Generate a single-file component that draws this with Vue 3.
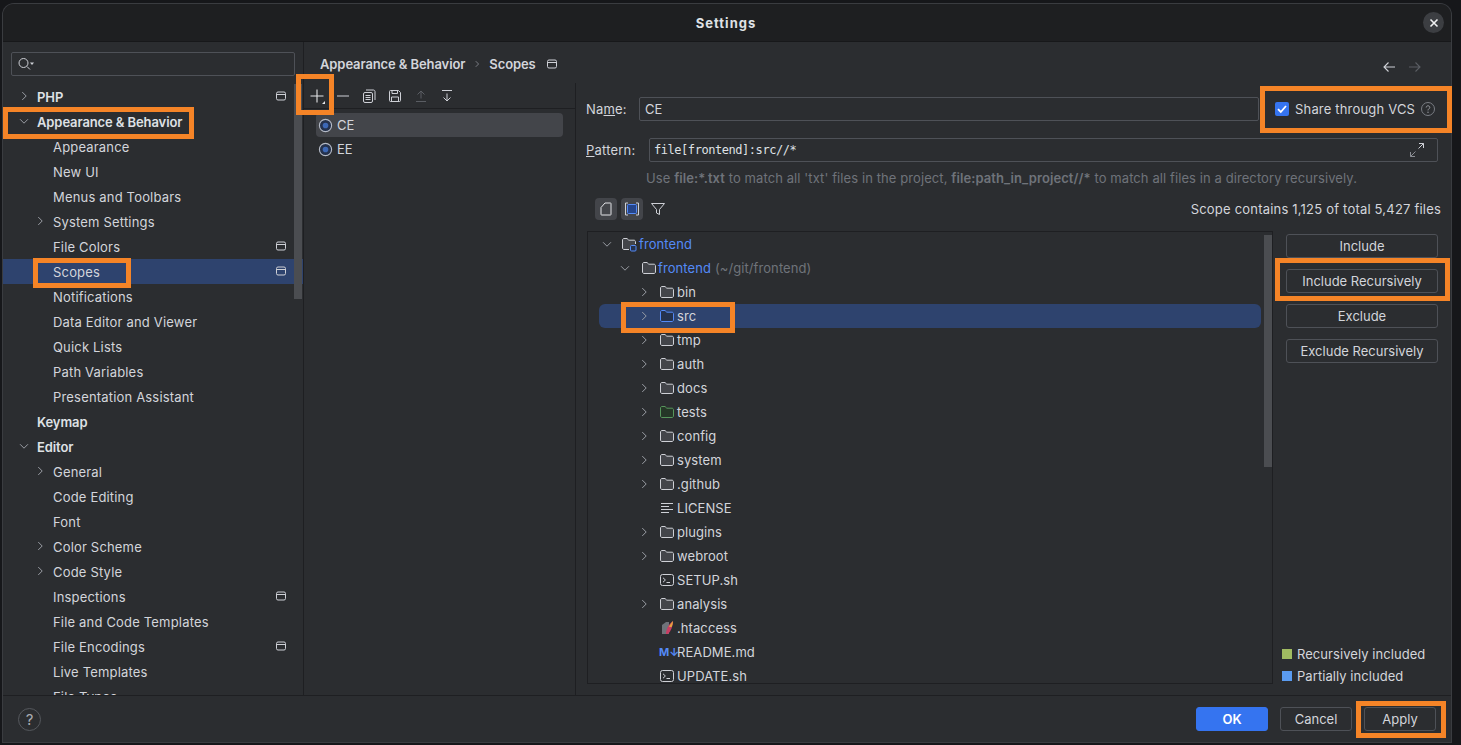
<script setup>
const settings = [
  { t: 'PHP', lv: 1, chev: 'r', bold: true, pin: true },
  { t: 'Appearance & Behavior', lv: 1, chev: 'd', bold: true },
  { t: 'Appearance', lv: 2 },
  { t: 'New UI', lv: 2 },
  { t: 'Menus and Toolbars', lv: 2 },
  { t: 'System Settings', lv: 2, chev: 'r' },
  { t: 'File Colors', lv: 2, pin: true },
  { t: 'Scopes', lv: 2, pin: true, sel: true },
  { t: 'Notifications', lv: 2 },
  { t: 'Data Editor and Viewer', lv: 2 },
  { t: 'Quick Lists', lv: 2 },
  { t: 'Path Variables', lv: 2 },
  { t: 'Presentation Assistant', lv: 2 },
  { t: 'Keymap', lv: 1, bold: true },
  { t: 'Editor', lv: 1, chev: 'd', bold: true },
  { t: 'General', lv: 2, chev: 'r' },
  { t: 'Code Editing', lv: 2 },
  { t: 'Font', lv: 2 },
  { t: 'Color Scheme', lv: 2, chev: 'r' },
  { t: 'Code Style', lv: 2, chev: 'r' },
  { t: 'Inspections', lv: 2, pin: true },
  { t: 'File and Code Templates', lv: 2 },
  { t: 'File Encodings', lv: 2, pin: true },
  { t: 'Live Templates', lv: 2 },
  { t: 'File Types', lv: 2 }
]
const files = [
  { t: 'frontend', lv: 0, chev: 'd', icon: 'module', link: true },
  { t: 'frontend', lv: 1, chev: 'd', icon: 'folder', link: true, note: '(~/git/frontend)' },
  { t: 'bin', lv: 2, chev: 'r', icon: 'folder' },
  { t: 'src', lv: 2, chev: 'r', icon: 'folder-src', sel: true },
  { t: 'tmp', lv: 2, chev: 'r', icon: 'folder' },
  { t: 'auth', lv: 2, chev: 'r', icon: 'folder' },
  { t: 'docs', lv: 2, chev: 'r', icon: 'folder' },
  { t: 'tests', lv: 2, chev: 'r', icon: 'folder-test' },
  { t: 'config', lv: 2, chev: 'r', icon: 'folder' },
  { t: 'system', lv: 2, chev: 'r', icon: 'folder' },
  { t: '.github', lv: 2, chev: 'r', icon: 'folder' },
  { t: 'LICENSE', lv: 2, icon: 'text' },
  { t: 'plugins', lv: 2, chev: 'r', icon: 'folder' },
  { t: 'webroot', lv: 2, chev: 'r', icon: 'folder' },
  { t: 'SETUP.sh', lv: 2, icon: 'shell' },
  { t: 'analysis', lv: 2, chev: 'r', icon: 'folder' },
  { t: '.htaccess', lv: 2, icon: 'apache' },
  { t: 'README.md', lv: 2, icon: 'md' },
  { t: 'UPDATE.sh', lv: 2, icon: 'shell' }
]
const actions = ['Include', 'Include Recursively', 'Exclude', 'Exclude Recursively']
</script>

<template>
  <div class="screen">
    <svg class="defs" width="0" height="0" aria-hidden="true">
      <symbol id="chev-r" viewBox="0 0 16 16"><path d="M6 3.500 10.500 8 6 12.500" fill="none" stroke="currentColor" stroke-width="1.100"/></symbol>
      <symbol id="chev-d" viewBox="0 0 16 16"><path d="M3.500 6 8 10.500 12.500 6" fill="none" stroke="currentColor" stroke-width="1.100"/></symbol>
      <symbol id="pin" viewBox="0 0 12 12"><rect x="1.500" y="2" width="9" height="8" rx="1.500" fill="none" stroke="currentColor"/><path d="M1.500 4.500h9" stroke="currentColor"/></symbol>
      <symbol id="folder" viewBox="0 0 16 16"><path d="M1.500 4c0-.8.7-1.500 1.500-1.500h3L7.800 4.200H13c.8 0 1.500.7 1.500 1.500V12c0 .8-.7 1.500-1.500 1.500H3c-.8 0-1.500-.7-1.500-1.500Z" fill="#43454a" stroke="#ced0d6"/></symbol>
      <symbol id="folder-src" viewBox="0 0 16 16"><path d="M1.500 4c0-.8.7-1.500 1.500-1.500h3L7.800 4.200H13c.8 0 1.500.7 1.500 1.500V12c0 .8-.7 1.500-1.500 1.500H3c-.8 0-1.500-.7-1.500-1.500Z" fill="#25324d" stroke="#548af7"/></symbol>
      <symbol id="folder-test" viewBox="0 0 16 16"><path d="M1.500 4c0-.8.7-1.500 1.500-1.500h3L7.800 4.200H13c.8 0 1.500.7 1.500 1.500V12c0 .8-.7 1.500-1.500 1.500H3c-.8 0-1.500-.7-1.500-1.500Z" fill="#253627" stroke="#57965c"/></symbol>
      <symbol id="module" viewBox="0 0 16 16"><path d="M8 13.500H3c-.8 0-1.500-.7-1.500-1.500V4c0-.8.7-1.500 1.500-1.500h3L7.800 4.200H13c.8 0 1.500.7 1.500 1.500V8" fill="#43454a" stroke="#ced0d6"/><rect x="9.500" y="9.500" width="5.500" height="5.500" rx="1" fill="#25324d" stroke="#548af7"/></symbol>
      <symbol id="text" viewBox="0 0 16 16"><path d="M2 3.500h12M2 6.500h8M2 9.500h12M2 12.500h8" stroke="#ced0d6" fill="none"/></symbol>
      <symbol id="shell" viewBox="0 0 16 16"><rect x="1.500" y="2.500" width="13" height="11" rx="2" fill="#2b2d30" stroke="#ced0d6"/><path d="m4 5.800 2.400 2.200L4 10.200M7.500 10.500H11" fill="none" stroke="#ced0d6"/></symbol>
      <symbol id="apache" viewBox="0 0 16 16"><path d="M3 14V5l4-3h3v12Z" fill="#6f737a"/><path d="M7 14C7 9 10 4 14 1c0 5-2 10-5 13Z" fill="#c93d63"/><path d="M10 7c1-2.500 2.500-4.500 4-6 0 2-.5 4-1.300 6Z" fill="#e8a33d"/></symbol>
      <symbol id="scope" viewBox="0 0 16 16"><circle cx="8" cy="8" r="6.500" fill="#25324d" stroke="#b4bac6" stroke-width="1.200"/><circle cx="8" cy="8" r="3" fill="#3d68b5"/></symbol>
    </svg>

    <div class="window">
      <header class="title">
        <span class="title-text">Settings</span>
        <button class="close" aria-label="Close">
          <svg width="10" height="10" viewBox="0 0 10 10"><path d="m1.500 1.500 7 7m0-7-7 7" stroke="#f0f1f2" stroke-width="1.600"/></svg>
        </button>
      </header>

      <div class="body">
        <aside class="side">
          <div class="search">
            <svg width="18" height="16" viewBox="0 0 18 16"><circle cx="6.500" cy="7" r="4.500" fill="none" stroke="#ced0d6"/><path d="m10 10.500 3 3" stroke="#ced0d6"/><path d="m13 6.500h4l-2 2.500Z" fill="#ced0d6"/></svg>
          </div>
          <div class="nav">
            <div v-for="n in settings" :key="n.t" class="nav-row" :class="{ sel: n.sel, bold: n.bold, ['lv' + n.lv]: true }">
              <svg v-if="n.chev" class="chev" width="14" height="14"><use :href="'#chev-' + n.chev"/></svg>
              <span class="nav-text">{{ n.t }}</span>
              <svg v-if="n.pin" class="pin" width="12" height="12"><use href="#pin"/></svg>
            </div>
            <div class="nav-thumb"></div>
          </div>
        </aside>

        <main class="main">
          <div class="crumbs">
            <span class="crumb">Appearance &amp; Behavior</span>
            <svg class="crumb-sep" width="10" height="10"><use href="#chev-r"/></svg>
            <span class="crumb">Scopes</span>
            <svg class="crumb-pin" width="12" height="12"><use href="#pin"/></svg>
            <div class="history">
              <svg width="16" height="16" viewBox="0 0 16 16"><path d="M14 8H3M7.500 3.500 3 8l4.500 4.500" fill="none" stroke="#ced0d6" stroke-width="1.100"/></svg>
              <svg width="16" height="16" viewBox="0 0 16 16"><path d="M2 8h11M8.500 3.500 13 8l-4.500 4.500" fill="none" stroke="#5a5d63" stroke-width="1.100"/></svg>
            </div>
          </div>

          <div class="split">
            <section class="scopes">
              <div class="scope-tools">
                <svg class="ti" width="16" height="16" viewBox="0 0 16 16"><path d="M8 1.500v13M1.500 8h13" stroke="#e4e5e8" stroke-width="1.100"/><path d="M16 13v3h-3Z" fill="#e4e5e8"/></svg>
                <svg class="ti" width="16" height="16" viewBox="0 0 16 16"><path d="M2 8h12" stroke="#ced0d6" stroke-width="1.100"/></svg>
                <svg class="ti" width="16" height="16" viewBox="0 0 16 16"><rect x="2.500" y="4.500" width="9" height="10" rx="1.500" fill="none" stroke="#ced0d6"/><path d="M5 2h7.500c.8 0 1.500.7 1.500 1.500V12M4.500 7.500h5M4.500 9.500h5M4.500 11.500h5" fill="none" stroke="#ced0d6"/></svg>
                <svg class="ti" width="16" height="16" viewBox="0 0 16 16"><path d="M2.500 3.500c0-.6.4-1 1-1h8l2 2v8c0 .6-.4 1-1 1h-9c-.6 0-1-.4-1-1Z" fill="none" stroke="#ced0d6"/><path d="M5 2.500v3h5.500v-3M4.500 13.500V9h7v4.500" fill="none" stroke="#ced0d6"/></svg>
                <svg class="ti" width="16" height="16" viewBox="0 0 16 16"><path d="M8 10.500V3M4.500 6.500 8 3l3.500 3.500M3 13.500h10" fill="none" stroke="#5a5d63"/></svg>
                <svg class="ti" width="16" height="16" viewBox="0 0 16 16"><path d="M8 5.500V13M4.500 9.500 8 13l3.500-3.500M3 2.500h10" fill="none" stroke="#ced0d6"/></svg>
              </div>
              <div class="scope-list">
                <div class="scope-row active"><svg width="15" height="15"><use href="#scope"/></svg>CE</div>
                <div class="scope-row"><svg width="15" height="15"><use href="#scope"/></svg>EE</div>
              </div>
            </section>

            <section class="form">
              <div class="field-row">
                <label class="lbl lbl-name">Na<u>m</u>e:</label>
                <div class="input name-input">CE</div>
                <label class="share">
                  <span class="check">
                    <svg width="14" height="14" viewBox="0 0 14 14"><path d="m3 7.200 2.800 2.800L11 4" fill="none" stroke="#fff" stroke-width="1.800"/></svg>
                  </span>
                  Share through VCS
                  <svg class="help" width="14" height="14" viewBox="0 0 14 14"><circle cx="7" cy="7" r="6.500" fill="none" stroke="#7a7d84"/><path d="M5.200 5.500C5.300 4.400 6 3.800 7 3.800s1.800.7 1.800 1.600c0 1.400-1.800 1.500-1.800 3" fill="none" stroke="#9a9da3"/><circle cx="7" cy="10.200" r=".7" fill="#9a9da3"/></svg>
                </label>
              </div>
              <div class="field-row pattern-row">
                <label class="lbl lbl-pattern"><u>P</u>attern:</label>
                <div class="input pattern-input">
                  <span class="mono">file[frontend]:src//*</span>
                  <svg width="16" height="16" viewBox="0 0 16 16"><path d="M10 1.500h4.500V6M14.500 1.500 9.500 6.500" fill="none" stroke="#ced0d6"/><path d="M6 14.500H1.500V10M1.500 14.500l5-5" fill="none" stroke="#8a8d93"/></svg>
                </div>
              </div>
              <p class="hint">Use <b>file:*.txt</b> to match all 'txt' files in the project, <b>file:path_in_project//*</b> to match all files in a directory recursively.</p>
              <div class="tree-tools">
                <span class="toggle"><svg width="16" height="16" viewBox="0 0 16 16"><path d="M3 6.500 7 2h5.500c.3 0 .5.200.5.500v11c0 .3-.2.500-.5.500h-9c-.3 0-.5-.2-.5-.5Z" fill="none" stroke="#e4e5e8"/></svg></span>
                <span class="toggle"><svg width="16" height="16" viewBox="0 0 16 16"><path d="M4 2H1.500v12H4M12 2h2.500v12H12" fill="none" stroke="#ced0d6"/><rect x="3.500" y="3.500" width="9" height="9" rx="1" fill="#25458a" stroke="#548af7"/></svg></span>
                <svg class="filter" width="16" height="16" viewBox="0 0 16 16"><path d="M1.500 2.500h13L9.500 8.500v5l-3-1.500V8.500Z" fill="none" stroke="#ced0d6"/></svg>
                <span class="count">Scope contains 1,125 of total 5,427 files</span>
              </div>
              <div class="lower">
                <div class="tree">
                  <div v-for="(f, i) in files" :key="i" class="file" :class="['f' + f.lv, { sel: f.sel }]">
                    <svg v-if="f.chev" class="fchev" width="14" height="14"><use :href="'#chev-' + f.chev"/></svg>
                    <span v-if="f.icon === 'md'" class="md">M↓</span>
                    <svg v-else class="ficon" width="16" height="16"><use :href="'#' + f.icon"/></svg>
                    <span :class="{ link: f.link }">{{ f.t }}</span>
                    <span v-if="f.note" class="note">{{ f.note }}</span>
                  </div>
                  <div class="tree-thumb"></div>
                </div>
                <div class="actions">
                  <button v-for="a in actions" :key="a" class="btn">{{ a }}</button>
                  <div class="legend">
                    <div class="lg"><i class="sw green"></i>Recursively included</div>
                    <div class="lg"><i class="sw blue"></i>Partially included</div>
                  </div>
                </div>
              </div>
            </section>
          </div>
        </main>
      </div>

      <footer class="foot">
        <span class="q">?</span>
        <button class="btn fb primary">OK</button>
        <button class="btn fb">Cancel</button>
        <button class="btn fb">Apply</button>
      </footer>
    </div>

    <i class="hl hl-plus"></i>
    <i class="hl hl-app"></i>
    <i class="hl hl-scopes"></i>
    <i class="hl hl-share"></i>
    <i class="hl hl-rec"></i>
    <i class="hl hl-src"></i>
    <i class="hl hl-apply"></i>
  </div>
</template>

<style>
html, body { margin: 0; background: #16171a; }
</style>

<style scoped>
* { box-sizing: border-box; }
.screen {
  position: relative; width: 1461px; height: 745px; overflow: hidden;
  padding: 4px 10px 3px 3px; background: #16171a;
  font: 13px/16px Inter, "Noto Sans", sans-serif; color: #d3d5db;
}
.defs { position: absolute; }
.window {
  height: 100%; display: flex; flex-direction: column; background: #2b2d30;
  border-radius: 11px 11px 0 0; overflow: hidden; box-shadow: 0 0 0 1px #3a3c40;
}
.title {
  position: relative; height: 38px; flex: none; display: flex; align-items: center; justify-content: center;
  background: #1e1f21; border-bottom: 1px solid #17181a;
}
.title-text { font-weight: 700; color: #dfe1e5; letter-spacing: 1px; margin-right: 2px; padding-top: 1px; }
.close {
  position: absolute; right: 7px; top: 8px; width: 21px; height: 21px; padding: 0; border: 0; border-radius: 50%;
  background: #3c3e42; display: flex; align-items: center; justify-content: center;
}
.body { flex: 1; min-height: 0; display: flex; }
.side { width: 301px; flex: none; border-right: 1px solid #1e1f22; padding-top: 10px; display: flex; flex-direction: column; }
.search {
  height: 24px; margin: 0 8px 0 8px; border: 1px solid #4e5157; border-radius: 2px;
  padding: 3px 0 0 5px; flex: none;
}
.search svg { display: block; }
.nav { position: relative; flex: 1; margin-top: 8px; overflow: hidden; }
.nav-row { position: relative; height: 25px; display: flex; align-items: center; letter-spacing: .18px; }
.nav-row.lv1 { padding-left: 34px; }
.nav-row.lv2 { padding-left: 50px; }
.nav-row.bold { font-weight: 600; color: #dfe1e5; letter-spacing: -.1px; }
.nav-row.sel { background: #2e436e; }
.chev { color: #9da0a8; position: absolute; top: 5px; }
.lv1 .chev { left: 14px; }
.lv2 .chev { left: 30px; }
.pin { position: absolute; left: 272px; top: 6px; color: #ced0d6; }
.nav-thumb { position: absolute; left: 291px; top: 0; width: 8px; height: 215px; background: #4b4d51; }

.main { flex: 1; min-width: 0; display: flex; flex-direction: column; }
.crumbs { height: 41px; flex: none; display: flex; align-items: center; padding: 3px 0 0 16px; }
.crumb { font-weight: 600; color: #d3d5db; letter-spacing: -.1px; }
.crumb-sep { margin: 0 7px 0 7px; color: #9da0a8; }
.crumb-pin { margin-left: 10px; color: #ced0d6; }
.history { margin-left: auto; margin-right: 28px; display: flex; gap: 10px; padding-top: 5px; }
.split { flex: 1; min-height: 0; display: flex; }
.scopes { width: 272px; flex: none; border-right: 1px solid #1e1f22; }
.scope-tools { height: 26px; border-bottom: 1px solid #1e1f22; display: flex; align-items: center; padding: 1px 0 0 5px; gap: 10px; }
.ti { flex: none; }
.scope-list { padding: 4px 12px 0; }
.scope-row { height: 24px; display: flex; align-items: center; gap: 4px; padding-left: 2px; border-radius: 4px; }
.scope-row.active { background: #43454a; }

.form { flex: 1; min-width: 0; padding: 14px 0 0 10px; display: flex; flex-direction: column; }
.field-row { display: flex; align-items: center; height: 24px; }
.pattern-row { margin-top: 17px; }
.lbl { flex: none; letter-spacing: .2px; }
.lbl-name { width: 53px; }
.lbl-pattern { width: 63px; }
.input { border: 1px solid #4e5157; border-radius: 2px; height: 24px; display: flex; align-items: center; padding-left: 5px; }
.name-input { width: 620px; padding-left: 5px; }
.pattern-input { width: 789px; justify-content: space-between; padding: 0 12px 0 4px; }
.mono { font: 12px/16px "DejaVu Sans Mono", monospace; color: #dfe1e5; letter-spacing: -.45px; }
.share { display: flex; align-items: center; margin-left: 16px; white-space: nowrap; letter-spacing: .18px; }
.check { width: 14px; height: 14px; border-radius: 2px; background: #3574f0; margin-right: 6px; display: flex; }
.help { margin-left: 6px; }
.hint { margin: 8px 0 0 60px; color: #6f737a; height: 16px; white-space: nowrap; letter-spacing: .09px; }
.hint b { font-weight: 600; }
.tree-tools { margin-top: 11px; height: 24px; display: flex; align-items: center; padding-left: 9px; }
.toggle { width: 22px; height: 22px; border-radius: 4px; background: #43454a; display: flex; align-items: center; justify-content: center; margin-right: 4px; }
.filter { margin-left: 3px; }
.count { margin-left: auto; margin-right: 10px; letter-spacing: .2px; }
.lower { flex: 1; min-height: 0; margin-top: 10px; display: flex; }
.tree { position: relative; width: 686px; height: 453px; border: 1px solid #1e1f22; overflow: hidden; flex: none; margin-left: 1px; letter-spacing: .08px; }
.file { position: relative; height: 24px; display: flex; align-items: center; white-space: nowrap; margin: 0 11px; border-radius: 6px; }
.file.sel { background: #2e436e; }
.f0 { padding-left: 22px; }
.f1 { padding-left: 42px; }
.f2 { padding-left: 60px; }
.fchev { position: absolute; top: 5px; color: #9da0a8; }
.f0 .fchev { left: 1px; }
.f1 .fchev { left: 19px; }
.f2 .fchev { left: 38px; }
.ficon { margin-right: 2px; flex: none; }
.f1 .ficon { margin-right: 1px; }
.link { color: #548af7; }
.note { margin-left: 4px; color: #6f737a; }
.md { width: 18px; font-weight: 700; font-size: 11px; color: #548af7; flex: none; letter-spacing: 0; }
.tree-thumb { position: absolute; left: 676px; top: 3px; width: 8px; height: 232px; background: #4b4d51; }
.actions { flex: 1; min-width: 0; padding: 3px 0 0 13px; position: relative; display: flex; flex-direction: column; }
.btn {
  width: 152px; height: 24px; border: 1px solid #4e5157; border-radius: 3px; background: #2b2d30;
  color: #d3d5db; font: inherit; padding: 0; margin-bottom: 11px;
}
.legend { position: absolute; left: 9px; top: 412px; letter-spacing: .06px; }
.lg { height: 22px; display: flex; align-items: center; gap: 5px; white-space: nowrap; }
.sw { width: 10px; height: 10px; }
.green { background: #a0bb61; }
.blue { background: #5a9bf0; }

.foot {
  height: 47px; flex: none; border-top: 1px solid #1e1f22; display: flex; align-items: center; justify-content: flex-end;
  gap: 12px; padding: 0 15px; position: relative;
}
.fb { width: 72px; margin: 0; }
.primary { background: #3574f0; border-color: #3574f0; color: #fff; font-weight: 600; }
.q {
  position: absolute; left: 15px; top: 12px; width: 23px; height: 23px; border-radius: 50%;
  border: 1px solid #55585d; display: flex; align-items: center; justify-content: center; font-size: 15px; color: #a9acb2;
}

.hl { position: absolute; border: 5px solid #f58427; pointer-events: none; }
.hl-plus { left: 296px; top: 74px; width: 38px; height: 41px; }
.hl-app { left: 3px; top: 107px; width: 191px; height: 32px; }
.hl-scopes { left: 33px; top: 258px; width: 98px; height: 30px; }
.hl-share { left: 1260px; top: 86px; width: 192px; height: 47px; }
.hl-rec { left: 1275px; top: 258px; width: 175px; height: 43px; }
.hl-src { left: 621px; top: 302px; width: 114px; height: 31px; }
.hl-apply { left: 1356px; top: 701px; width: 90px; height: 37px; }
</style>
